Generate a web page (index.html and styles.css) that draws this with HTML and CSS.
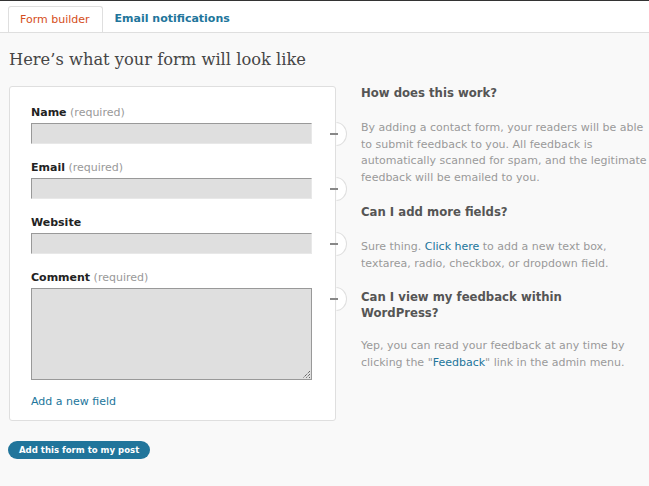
FILE: index.html
```html
<!DOCTYPE html>
<html>
<head>
<meta charset="utf-8">
<link rel="stylesheet" href="styles.css">
</head>
<body>
<div class="topbar"></div>
<div class="tabs">
  <span class="tab tab-active">Form builder</span>
  <span class="tab tab-link">Email notifications</span>
</div>
<div class="main">
  <h1 class="title">Here’s what your form will look like</h1>
  <div class="columns">
    <div class="left">
      <div class="panel">
        <div class="field">
          <div class="label"><b>Name</b> <span class="req">(required)</span></div>
          <div class="input"></div>
          <span class="bulge"></span><span class="minus"></span>
        </div>
        <div class="field">
          <div class="label"><b>Email</b> <span class="req">(required)</span></div>
          <div class="input"></div>
          <span class="bulge"></span><span class="minus"></span>
        </div>
        <div class="field">
          <div class="label"><b>Website</b></div>
          <div class="input"></div>
          <span class="bulge"></span><span class="minus"></span>
        </div>
        <div class="field">
          <div class="label"><b>Comment</b> <span class="req">(required)</span></div>
          <div class="input textarea">
            <svg class="grip" width="9" height="9" viewBox="0 0 9 9"><path d="M8 1L1 8M8 4L4 8M8 7L7 8" stroke="#333" stroke-width="1" stroke-dasharray="1 1"/></svg>
          </div>
          <span class="bulge"></span><span class="minus"></span>
        </div>
        <a class="addfield">Add a new field</a>
      </div>
      <div class="btnrow"><span class="button">Add this form to my post</span></div>
    </div>
    <div class="right">
      <h3 class="q">How does this work?</h3>
      <p class="a">By adding a contact form, your readers will be able to submit feedback to you. All feedback is automatically scanned for spam, and the legitimate feedback will be emailed to you.</p>
      <h3 class="q">Can I add more fields?</h3>
      <p class="a">Sure thing. <a class="link">Click here</a> to add a new text box, textarea, radio, checkbox, or dropdown field.</p>
      <h3 class="q q-narrow">Can I view my feedback within WordPress?</h3>
      <p class="a">Yep, you can read your feedback at any time by clicking the "<a class="link">Feedback</a>" link in the admin menu.</p>
    </div>
  </div>
</div>
</body>
</html>
```
FILE: styles.css
```css
html, body {
  margin: 0;
  padding: 0;
}
body {
  background: #f9f9f9;
  font-family: "DejaVu Sans", Verdana, sans-serif;
  font-size: 11px;
  color: #333;
  height: 486px;
  overflow: hidden;
}
.topbar {
  height: 1px;
  background: #333;
}
.tabs {
  background: #fff;
  border-bottom: 1px solid #dfdfdf;
  display: flex;
  align-items: flex-end;
  padding-left: 8px;
  box-sizing: border-box;
  height: 32px;
}
.tab {
  height: 26px;
  line-height: 26px;
  font-size: 11px;
  box-sizing: border-box;
  white-space: nowrap;
}
.tab-active {
  color: #d54e21;
  border: 1px solid #dfdfdf;
  border-bottom: none;
  border-radius: 3px 3px 0 0;
  padding: 0 12px 0 11px;
}
.tab-link {
  color: #21759b;
  font-weight: bold;
  padding-left: 12px;
}
.main {
  padding: 0 0 0 9px;
}
.title {
  font-family: "DejaVu Serif", Georgia, serif;
  font-weight: normal;
  font-size: 16.3px;
  color: #464646;
  margin: 16px 0 15px;
  line-height: 22px;
}
.columns {
  display: flex;
  gap: 25px;
}
.left {
  width: 327px;
  flex: none;
}
.panel {
  background: #fff;
  border: 1px solid #dfdfdf;
  border-radius: 3px;
  padding: 18px 0 11px;
  position: relative;
}
.field {
  position: relative;
  padding: 0 23px 0 21px;
  margin-bottom: 16px;
}
.label {
  line-height: 15px;
  font-size: 11px;
  color: #222;
  margin-bottom: 3px;
}
.label b {
  font-weight: bold;
}
.req {
  color: #999;
}
.input {
  height: 21px;
  background: #dfdfdf;
  border: 1px solid #e8e8e8;
  border-top-color: #999;
  border-left-color: #999;
  box-sizing: border-box;
  position: relative;
}
.textarea {
  height: 92px;
  border-color: #999;
}
.grip {
  position: absolute;
  right: 0;
  bottom: 0;
}
.bulge {
  position: absolute;
  right: -12px;
  top: 17px;
  width: 20px;
  height: 22px;
  border: 1px solid #dfdfdf;
  border-radius: 50%;
  background: #fff;
  clip-path: inset(0 0 0 52%);
}
.minus {
  position: absolute;
  right: -3px;
  top: 28px;
  width: 8px;
  height: 2px;
  background: #888;
  z-index: 2;
}
.addfield {
  display: block;
  color: #21759b;
  padding-left: 21px;
  line-height: 15px;
  margin-top: -2px;
}
.btnrow {
  margin-top: 20px;
}
.button {
  display: inline-block;
  background: #21759b;
  color: #fff;
  font-family: "DejaVu Sans Condensed", "DejaVu Sans", sans-serif;
  font-weight: bold;
  font-size: 9.5px;
  height: 18px;
  line-height: 18px;
  padding: 0 11px;
  border-radius: 9px;
  margin-left: -1px;
}
.right {
  width: 288px;
  margin-top: -1px;
}
.q {
  font-size: 11.7px;
  font-weight: bold;
  color: #555;
  line-height: 16px;
  margin: 0 0 19px;
}
.q-narrow {
  max-width: 270px;
  margin-bottom: 17px;
}
.a {
  color: #999;
  line-height: 16.7px;
  margin: 0 0 17px;
}
.link {
  color: #21759b;
}
```
